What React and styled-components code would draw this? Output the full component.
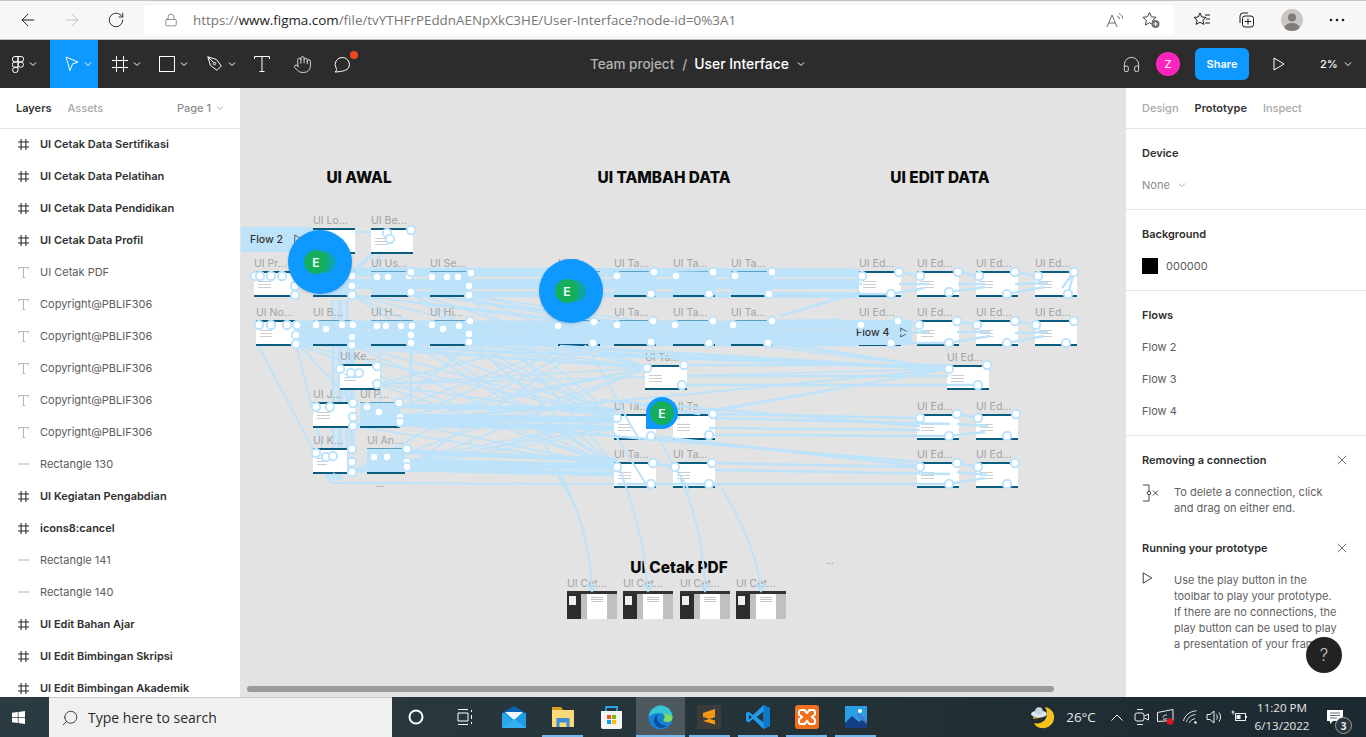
import React from 'react';
import styled, { createGlobalStyle } from 'styled-components';
import { ArrowLeft, ArrowRight, RotateCw, Lock, Headphones, Hand, X, Search } from 'lucide-react';

const BLUE = '#0d99ff';
const LINK = '#bde3fb';
const CX = 240;
const CY = 88;

const GlobalStyle = createGlobalStyle`
  html, body { margin: 0; padding: 0; height: 100%; overflow: hidden; }
  body { font-family: Inter, "Liberation Sans", sans-serif; background: #fff; }
  * { box-sizing: border-box; }
`;

const Page = styled.div`
  width: 1366px;
  height: 737px;
  display: flex;
  flex-direction: column;
  overflow: hidden;
`;

/* browser chrome */
const BrowserBar = styled.div`
  height: 40px;
  flex: none;
  display: flex;
  align-items: center;
  background: #f7f7f7;
  border-top: 1px solid #c4c4c4;
  border-bottom: 1px solid #bdbdbd;
  padding-left: 6px;
  color: #1c1c1c;
`;
const NavButton = styled.div`
  width: 44px;
  display: flex;
  justify-content: center;
  color: ${p => (p.$off ? '#c4c4c4' : '#1c1c1c')};
`;
const UrlBox = styled.div`
  width: 1030px;
  height: 30px;
  margin-left: 6px;
  background: #fff;
  border-radius: 4px;
  display: flex;
  align-items: center;
  padding: 0 14px 0 20px;
  color: #555;
`;
const UrlText = styled.div`
  margin-left: 15px;
  flex: 1;
  font: 13.4px "Open Sans", sans-serif;
  color: #767676;
  white-space: nowrap;
  b { font-weight: 400; color: #222; }
`;
const UrlIcons = styled.div`
  display: flex;
  gap: 18px;
  align-items: center;
`;
const BrowserTools = styled.div`
  display: flex;
  align-items: center;
  margin-left: 19px;
  gap: 26px;
  color: #1c1c1c;
`;
const Profile = styled.div`
  width: 22px;
  height: 22px;
  border-radius: 50%;
  background: #c9c6c3;
  overflow: hidden;
  svg { display: block; }
`;

/* figma toolbar */
const Toolbar = styled.div`
  height: 48px;
  flex: none;
  display: flex;
  align-items: stretch;
  background: #2c2c2c;
  color: #fff;
`;
const Tool = styled.div`
  width: ${p => p.$w}px;
  display: flex;
  align-items: center;
  justify-content: ${p => (p.$pad ? 'flex-start' : 'center')};
  padding-left: ${p => p.$pad || 0}px;
  gap: 5px;
  position: relative;
  background: ${p => (p.$active ? BLUE : 'transparent')};
`;
const RedDot = styled.span`
  position: absolute;
  top: 11px;
  right: 4px;
  width: 8px;
  height: 8px;
  border-radius: 50%;
  background: #f24822;
`;
const DocTitle = styled.div`
  margin-left: 228px;
  display: flex;
  align-items: center;
  font-size: 13.5px;
  font-weight: 500;
  white-space: nowrap;
  color: #b3b3b3;
  span { margin: 0 7px 0 8px; }
  strong { font-size: 13.9px; font-weight: 500; color: #fff; margin-right: 8px; }
`;
const ToolbarRight = styled.div`
  margin-left: auto;
  display: flex;
  align-items: center;
`;
const Avatar = styled.div`
  width: 24px;
  height: 24px;
  margin-left: 15px;
  border-radius: 50%;
  background: #ff24bd;
  font-size: 11px;
  font-weight: 500;
  display: flex;
  align-items: center;
  justify-content: center;
`;
const ShareButton = styled.div`
  width: 54px;
  height: 32px;
  margin-left: 15px;
  background: ${BLUE};
  border-radius: 6px;
  font-size: 11px;
  font-weight: 600;
  display: flex;
  align-items: center;
  justify-content: center;
`;
const PlayWrap = styled.div`
  margin-left: 24px;
  display: flex;
`;
const Zoom = styled.div`
  margin-left: 35px;
  margin-right: 9px;
  width: 37px;
  font-size: 11px;
  font-weight: 500;
  display: flex;
  align-items: center;
  gap: 6px;
`;

/* main area */
const Main = styled.div`
  flex: 1;
  min-height: 0;
  display: flex;
`;
const LeftPanel = styled.div`
  width: 240px;
  flex: none;
  background: #fff;
  overflow: hidden;
`;
const PanelHead = styled.div`
  height: 41px;
  display: flex;
  align-items: center;
  padding-left: 16px;
  gap: 16px;
  font-size: 11px;
  font-weight: 500;
  color: #a8a8a8;
  border-bottom: 1px solid #e5e5e5;
`;
const HeadTab = styled.span`
  font-weight: ${p => (p.$on ? 600 : 500)};
  color: ${p => (p.$on ? '#333' : '#a8a8a8')};
`;
const PageSwitch = styled.span`
  margin-left: auto;
  margin-right: 16px;
  display: flex;
  align-items: center;
  gap: 5px;
  color: #8a8a8a;
`;
const LayerList = styled.div`
  margin-top: -1px;
`;
const LayerRow = styled.div`
  height: 32px;
  display: flex;
  align-items: center;
  padding-left: 18px;
  gap: 11px;
  font-size: 11px;
  font-weight: ${p => (p.$frame ? 600 : 400)};
  color: ${p => (p.$frame ? '#2f2f2f' : '#5b5b5b')};
  white-space: nowrap;
`;
const Canvas = styled.div`
  flex: 1;
  position: relative;
  background: #e3e3e3;
  overflow: hidden;
`;
const Layer = styled.svg`
  position: absolute;
  left: 0;
  top: 0;
  pointer-events: none;
`;
const SectionTitle = styled.div`
  position: absolute;
  left: ${p => p.$x - CX}px;
  top: ${p => p.$y - CY}px;
  transform: translate(-50%, -50%);
  font-family: Inter, sans-serif;
  font-weight: 800;
  font-size: 15.4px;
  color: #0a0a0a;
  white-space: nowrap;
`;
const Frame = styled.div`
  position: absolute;
  left: ${p => p.$x - CX}px;
  top: ${p => p.$y - CY}px;
  width: ${p => p.$w}px;
  height: ${p => p.$h}px;
`;
const FrameLabel = styled.div`
  position: absolute;
  left: 0;
  top: -14px;
  font-size: 10.5px;
  line-height: 13px;
  color: #a2a2a2;
  white-space: nowrap;
`;
const Thumb = styled.div`
  height: 100%;
  padding-top: 2px;
  background: ${p => (p.$covered ? LINK : '#fff')};
  border-top: ${p => (p.$covered ? 1 : 2)}px solid ${p => (p.$covered ? '#5e9fc0' : '#0b5d80')};
  border-bottom: 2px solid #0b5d80;
`;
const ThumbLines = styled.div`
  margin: 6px 4px 0;
  height: 7px;
  width: 30%;
  background: repeating-linear-gradient(#cdcdcd 0 1px, transparent 1px 3px);
`;
const PrintThumb = styled.div`
  height: 100%;
  display: grid;
  grid-template-columns: 28% 11% 40% 21%;
  grid-template-rows: 3px 1fr;
  background: #c0c0c0;
`;
const PrintTop = styled.div`
  grid-column: 1 / -1;
  background: #333;
`;
const PrintSide = styled.div`
  background: #2c2c2c;
  padding: 2px 5px 0 2px;
  &::before {
    content: '';
    display: block;
    height: 9px;
    background: #eee;
  }
`;
const PrintGap = styled.div`
  background: #c0c0c0;
`;
const PrintSheet = styled.div`
  background: #fff;
  padding: 3px 4px;
  &::before {
    content: '';
    display: block;
    height: 5px;
    background: repeating-linear-gradient(#c4c4c4 0 1px, transparent 1px 2px);
  }
`;
const FlowTag = styled.div`
  position: absolute;
  left: ${p => p.$x - CX}px;
  top: ${p => p.$y - CY}px;
  width: ${p => p.$w}px;
  height: 25px;
  padding-left: 9px;
  gap: 11px;
  display: flex;
  align-items: center;
  background: ${LINK};
  font-size: 10.5px;
  font-weight: 500;
  color: #333;
`;
const Cursor = styled.div`
  position: absolute;
  left: ${p => p.$x - 32 - CX}px;
  top: ${p => p.$y - 32 - CY}px;
  width: 64px;
  height: 64px;
  border-radius: 50%;
  background: ${BLUE};
  box-shadow: 0 1px 3px rgba(0, 0, 0, 0.18);
  display: flex;
  align-items: center;
  justify-content: center;
`;
const PinCursor = styled.div`
  position: absolute;
  left: 406px;
  top: 309px;
  width: 32px;
  height: 32px;
  border-radius: 50% 50% 50% 0;
  background: ${BLUE};
  display: flex;
  align-items: center;
  justify-content: center;
`;
const Face = styled.div`
  width: 24px;
  height: 24px;
  margin-right: ${p => (p.$pin ? 0 : 8)}px;
  border-radius: 50%;
  background: #14ae5c;
  color: #fff;
  font-size: 12px;
  font-weight: 600;
  display: flex;
  align-items: center;
  justify-content: center;
  position: relative;
  ${p => !p.$pin && `box-shadow: 8px 0 0 -1px #10a5a0;`}
`;
const Dots = styled.div`
  position: absolute;
  left: ${p => p.$x - CX}px;
  top: ${p => p.$y - CY}px;
  font-size: 9px;
  color: #999;
`;
const ScrollBar = styled.div`
  position: absolute;
  left: 7px;
  bottom: 5px;
  width: 807px;
  height: 6px;
  border-radius: 3px;
  background: #9b9b9b;
`;
const RightPanel = styled.div`
  width: 240px;
  flex: none;
  background: #fff;
  position: relative;
  overflow: hidden;
`;
const Section = styled.div`
  height: ${p => p.$h}px;
  padding: 0 16px;
  border-bottom: ${p => (p.$open ? 'none' : '1px solid #e5e5e5')};
`;
const SectionHead = styled.div`
  height: 48px;
  display: flex;
  align-items: center;
  justify-content: space-between;
  font-size: 11px;
  font-weight: 600;
  color: #2f2f2f;
`;
const FieldList = styled.div`
  margin-top: -8px;
`;
const Field = styled.div`
  height: 32px;
  display: flex;
  align-items: center;
  gap: 8px;
  font-size: 11px;
  color: ${p => p.$color || '#5b5b5b'};
`;
const Swatch = styled.span`
  width: 16px;
  height: 16px;
  background: #000;
`;
const Tip = styled.div`
  display: flex;
  gap: 10px;
  font-size: 11px;
  line-height: 16px;
  color: #5f5f5f;
  white-space: nowrap;
`;
const TipIcon = styled.div`
  width: 22px;
  flex: none;
  display: flex;
`;
const HelpButton = styled.div`
  position: absolute;
  right: 24px;
  bottom: 24px;
  width: 36px;
  height: 36px;
  border-radius: 50%;
  background: #222;
  color: #c8c8c8;
  font-size: 17px;
  font-weight: 300;
  display: flex;
  align-items: center;
  justify-content: center;
`;

/* windows taskbar */
const Taskbar = styled.div`
  height: 40px;
  flex: none;
  display: flex;
  align-items: center;
  background: linear-gradient(90deg, #2b3b42, #263539 45%, #1c2931);
  color: #fff;
`;
const StartButton = styled.div`
  width: 49px;
  padding-left: 12px;
  display: flex;
`;
const SearchBox = styled.div`
  width: 343px;
  height: 40px;
  background: #f0f0f0;
  border-top: 1px solid #c9c9c9;
  display: flex;
  align-items: center;
  padding-left: 12px;
  gap: 9px;
  font: 14px "Open Sans", sans-serif;
  color: #2b2b2b;
  svg { color: #222; transform: scaleX(-1); }
`;
const TaskItem = styled.div`
  width: 48.8px;
  height: 40px;
  flex: none;
  position: relative;
  display: flex;
  align-items: center;
  justify-content: center;
  background: ${p => (p.$active ? '#4d585e' : 'transparent')};
  &::after {
    content: ${p => (p.$open ? "''" : 'none')};
    position: absolute;
    left: ${p => (p.$active ? 0 : 4)}px;
    right: ${p => (p.$active ? 0 : 4)}px;
    bottom: 0;
    height: 2px;
    background: #76b9ed;
  }
`;
const Tray = styled.div`
  margin-left: auto;
  display: flex;
  align-items: center;
  height: 40px;
  font: 13.4px "Open Sans", sans-serif;
  color: #e8e8e8;
`;
const TraySlot = styled.div`
  width: ${p => p.$w}px;
  display: flex;
  justify-content: center;
  align-items: center;
  position: relative;
`;
const Clock = styled.div`
  width: 60px;
  text-align: center;
  font-size: 11.6px;
  line-height: 18px;
  white-space: nowrap;
`;
const Badge = styled.span`
  position: absolute;
  left: 23px;
  top: 7px;
  width: 17px;
  height: 17px;
  border-radius: 50%;
  background: #2a363c;
  border: 1px solid #9aa0a3;
  font-size: 10px;
  font-weight: 700;
  display: flex;
  align-items: center;
  justify-content: center;
`;

const Chevron = ({ color = '#fff', size = 8 }) => (
  <svg width={size} height={size} viewBox="0 0 8 8" fill="none">
    <path d="M1 2.500l3 3 3-3" stroke={color} strokeWidth="1" />
  </svg>
);
const HashIcon = ({ size = 16, color = '#fff', stroke = 1 }) => (
  <svg width={size} height={size} viewBox="0 0 16 16" fill="none" stroke={color} strokeWidth={stroke}>
    <path d="M4.500 0v16M11.500 0v16M0 4.500h16M0 11.500h16" />
  </svg>
);
const TIcon = ({ size = 11, color = '#b3b3b3' }) => (
  <svg width={size} height={size} viewBox="0 0 10 10" fill="none" stroke={color} strokeWidth="0.9">
    <path d="M.5 2V.5h9V2M5 .5v9M3.500 9.500h3" />
  </svg>
);
const LineIcon = () => (
  <svg width="11" height="10" viewBox="0 0 11 10">
    <path d="M0 5h11" stroke="#b3b3b3" />
  </svg>
);
const PlayIcon = ({ color = '#fff', w = 12, h = 14 }) => (
  <svg width={w} height={h} viewBox="0 0 12 14" fill="none">
    <path d="M1 1l10 6-10 6z" stroke={color} />
  </svg>
);
const FigmaMark = () => (
  <svg width="12" height="17" viewBox="0 0 12 17" fill="none" stroke="#fff" strokeWidth="1">
    <path d="M6 .5H3a2.700 2.700 0 000 5.400h3zM6 .5h3a2.700 2.700 0 010 5.400H6zM6 5.900H3a2.700 2.700 0 000 5.400h3z" />
    <circle cx="8.800" cy="8.600" r="2.700" />
    <path d="M6 11.300H3A2.700 2.700 0 106 14z" />
  </svg>
);
const MoveIcon = () => (
  <svg width="14" height="16" viewBox="0 0 14 16" fill="none" stroke="#fff" strokeWidth="1">
    <path d="M1 1l12 5.200-5.400 1.600L5 14.600z" />
  </svg>
);
const PenIcon = () => (
  <svg width="16" height="16" viewBox="0 0 16 16" fill="none" stroke="#fff" strokeWidth="1">
    <path d="M.8.8l8.500 2.600 5 6.600-4.300 4.300-6.600-5zM.8.8l5.800 5.800" />
    <circle cx="7.500" cy="7.500" r="1.200" />
  </svg>
);
const TextTool = () => (
  <svg width="16" height="16" viewBox="0 0 16 16" fill="none" stroke="#fff" strokeWidth="1">
    <path d="M.5 3V.5h15V3M8 .5v15M5.500 15.500h5" />
  </svg>
);
const CommentIcon = () => (
  <svg width="19" height="19" viewBox="0 0 19 19" fill="none" stroke="#fff" strokeWidth="1">
    <path d="M9.500 2.500a7 7 0 016 10.400c-1.500 2.200-4.800 3.600-13.500 4.100 1.500-1 2-2.300 1.200-3.800A7 7 0 019.500 2.500z" />
  </svg>
);

const Reader = () => (
  <svg width="18" height="16" viewBox="0 0 18 16" fill="none" stroke="#6d6d6d" strokeWidth="1">
    <path d="M1 15L6 3l5 12M3 11h6M11 4c1.600.5 2.400 1.600 2.400 3M13 1.500c2.200.8 3.500 2.500 3.500 5" />
  </svg>
);
const FavAdd = () => (
  <svg width="18" height="18" viewBox="0 0 18 18" fill="none">
    <path d="M7.500 1.500l2 4.300 4.600.5-3.400 3.100.9 4.600-4.100-2.300-4.100 2.300.9-4.600L.9 6.300l4.600-.5z" stroke="#444" />
    <circle cx="13.500" cy="13" r="4" fill="#707070" />
    <path d="M13.500 11v4M11.500 13h4" stroke="#fff" />
  </svg>
);
const FavList = () => (
  <svg width="18" height="18" viewBox="0 0 18 18" fill="none" stroke="#1c1c1c">
    <path d="M7 2l1.800 4 4.200.4-3.100 2.800.9 4.200L7 11.300l-3.800 2.100.9-4.200L1 6.400l4.200-.4zM12 4h5M13 8h4M12 12h5" />
  </svg>
);
const Collections = () => (
  <svg width="18" height="18" viewBox="0 0 18 18" fill="none" stroke="#1c1c1c">
    <path d="M3 12V5a3 3 0 013-3h5" />
    <rect x="5.500" y="5" width="11" height="11" rx="2.500" />
    <path d="M11 7.500v6M8 10.500h6" />
  </svg>
);
const ProfileGlyph = () => (
  <svg width="22" height="22" viewBox="0 0 22 22">
    <circle cx="11" cy="8.500" r="4" fill="#7f7c78" />
    <ellipse cx="11" cy="19" rx="7.500" ry="5" fill="#7f7c78" />
  </svg>
);
const MoreDots = () => (
  <svg width="16" height="4" viewBox="0 0 16 4" fill="#1c1c1c">
    <circle cx="2" cy="2" r="1.300" /><circle cx="8" cy="2" r="1.300" /><circle cx="14" cy="2" r="1.300" />
  </svg>
);

const RemoveIcon = () => (
  <svg width="20" height="18" viewBox="0 0 20 18" fill="none" stroke="#333" strokeWidth="0.9">
    <path d="M1 1h6v16H1" />
    <circle cx="7" cy="9" r="1.700" fill="#fff" />
    <path d="M11 6.500l5 5M16 6.500l-5 5" />
  </svg>
);

/* taskbar icons */
const WinLogo = () => (
  <svg width="13" height="13" viewBox="0 0 13 13" fill="#fff">
    <path d="M0 1.800l5.800-.8v5.200H0zM6.500.9L13 0v6.200H6.500zM0 6.900h5.800V12L0 11.200zM6.500 6.900H13V13l-6.500-.9z" />
  </svg>
);
const TaskCircle = () => (
  <svg width="16" height="16" viewBox="0 0 16 16" fill="none" stroke="#fff" strokeWidth="2">
    <circle cx="8" cy="8" r="6.500" />
  </svg>
);
const TaskView = () => (
  <svg width="16" height="20" viewBox="0 0 16 20" fill="none" stroke="#fff">
    <path d="M1 2.500h10M1 17.500h10M1 6h10v8H1zM14.500 3v2M14.500 8v4M14.500 15v2" />
  </svg>
);
const MailIcon = () => (
  <svg width="24" height="22" viewBox="0 0 24 22">
    <path d="M0 7L12 0l12 7v1H0z" fill="#0a63b5" />
    <path d="M0 7h24v15H0z" fill="#1f9be6" />
    <path d="M3 6h18l-9 8z" fill="#f2f7fb" />
    <path d="M0 22l12-9 12 9z" fill="#39aef0" />
    <path d="M0 7l10 7-10 8z" fill="#2aa6ec" />
  </svg>
);
const FolderIcon = () => (
  <svg width="22" height="20" viewBox="0 0 22 20">
    <path d="M0 0h9l2 3H0z" fill="#d99f1f" />
    <path d="M0 3h22v17H0z" fill="#f9d978" />
    <path d="M4.500 11h13v9h-3v-4.500h-7V20h-3z" fill="#3b8edb" />
  </svg>
);
const StoreIcon = () => (
  <svg width="23" height="24" viewBox="0 0 23 24">
    <path d="M6 7V2h11v5" fill="none" stroke="#2aa3ea" strokeWidth="1.800" />
    <path d="M1 6h21v16a2 2 0 01-2 2H3a2 2 0 01-2-2z" fill="#f5f5f5" />
    <path d="M7 10h4v4H7z" fill="#f25022" />
    <path d="M12 10h4v4h-4z" fill="#7fba00" />
    <path d="M7 15h4v4H7z" fill="#00a4ef" />
    <path d="M12 15h4v4h-4z" fill="#ffb900" />
  </svg>
);
const EdgeIcon = () => (
  <svg width="25" height="25" viewBox="0 0 25 25">
    <circle cx="12.500" cy="12.500" r="12" fill="#1582d8" />
    <path d="M1 10C3 3 9 .5 12.500.5 19 .5 24.500 5.500 24.500 12c0 3-2 5-5 5-2.500 0-4-1-4-2 3-2 1-7-4-7C7 8 3 9 1 12z" fill="#37c6d0" />
    <path d="M24.500 12c0 3-2 5-5 5-2.500 0-4-1-4-2 2-2 1.500-5-.5-6.500 4 0 7 1 9.500 3.500z" fill="#7fdc5a" />
    <path d="M7 19c-2-3-1-8 2.500-9.500C7.500 15 12 21 19 20.500 16 24 9 24 7 19z" fill="#0c4f9c" />
  </svg>
);
const SublimeIcon = () => (
  <svg width="24" height="24" viewBox="0 0 24 24">
    <rect width="24" height="24" rx="2" fill="#3c3c3c" />
    <path d="M6 8l12-4v4L6 12zM6 12l12 3.500v4L6 16zM6 16l12-4v-4L6 12z" fill="#f89a12" />
    <path d="M6 12l12-3.800V8.800L6 12.600z" fill="#d97e08" />
  </svg>
);
const VsCodeIcon = () => (
  <svg width="24" height="24" viewBox="0 0 24 24">
    <path d="M17.500 0L24 3v18l-6.500 3L7 14l-4.500 3.500L0 16v-8l2.500-1.500L7 10z" fill="#1f9cf0" />
    <path d="M17.500 6.500L10.500 12l7 5.500z" fill="#273639" />
    <path d="M2.800 9.500L6 12l-3.200 2.500z" fill="#273639" />
    <path d="M17.500 0L24 3v18l-6.500 3z" fill="#0a7acb" />
  </svg>
);
const XamppIcon = () => (
  <svg width="24" height="24" viewBox="0 0 24 24">
    <rect width="24" height="24" rx="3" fill="#f0701f" />
    <path d="M6 5h3.500L12 8l2.500-3H18a2 2 0 012 2v2.500L17 12l3 2.500V17a2 2 0 01-2 2h-3.500L12 16l-2.500 3H6a2 2 0 01-2-2v-2.500L7 12 4 9.500V7a2 2 0 012-2z" fill="none" stroke="#fff" strokeWidth="2" />
  </svg>
);
const PhotosIcon = () => (
  <svg width="22" height="22" viewBox="0 0 22 22">
    <path d="M0 0h22v22H0z" fill="#2a9fe6" />
    <path d="M0 17l7-7 7 6 4-3 4 3v6H0z" fill="#123f85" />
    <path d="M9 8l5 4 8 6v-3l-7-7-4 1z" fill="#4a78d0" />
    <circle cx="15" cy="5" r="2" fill="#fff" />
  </svg>
);
const WeatherIcon = () => (
  <svg width="24" height="26" viewBox="0 0 24 26">
    <path d="M14 3c6 1 10 6 9 12-1 6-7 10-13 9-3-.5-6-2-7-5 7 2 13-3 13-9 0-3-1-5-2-7z" fill="#f8c21c" />
    <path d="M2 14c3 0 6 0 9-2" fill="none" stroke="#f8c21c" strokeWidth="1.500" />
    <ellipse cx="8" cy="10" rx="8" ry="3.500" fill="#dbe8f2" />
    <circle cx="8" cy="7" r="3.800" fill="#c5d7e6" />
  </svg>
);
const TrayCaret = () => (
  <svg width="12" height="7" viewBox="0 0 12 7" fill="none" stroke="#fff">
    <path d="M.5 6.500L6 1l5.500 5.500" />
  </svg>
);
const MeetIcon = () => (
  <svg width="16" height="18" viewBox="0 0 16 18" fill="none" stroke="#eee">
    <path d="M3 1.500h6M3 16.500h6" />
    <rect x="1" y="5" width="9" height="8" rx="2" />
    <path d="M10.500 8l4-2v6l-4-2" />
  </svg>
);
const ScreenIcon = () => (
  <svg width="18" height="16" viewBox="0 0 18 16">
    <path d="M.5 3.500l15.500-3v11l-15.500 1z" fill="none" stroke="#eee" />
    <path d="M6 8.500c0-2 2-2.500 4-2.500M10 9c0 1-2 1.500-4 1" fill="none" stroke="#eee" />
    <circle cx="13" cy="12.500" r="3.200" fill="#e81123" />
  </svg>
);
const WifiIcon = () => (
  <svg width="15" height="14" viewBox="0 0 15 14" fill="none" stroke="#ddd">
    <path d="M.5 11C1.500 5.500 7 1 13.500.8M3.500 12c.6-3.500 4-7 9-7.500M6.500 13c.4-2 2.500-4 5.500-4.300" />
    <circle cx="12.500" cy="12.500" r="1.200" fill="#fff" stroke="none" />
  </svg>
);
const VolumeIcon = () => (
  <svg width="17" height="14" viewBox="0 0 17 14" fill="none" stroke="#eee">
    <path d="M1 4.500h3L8 1v12L4 9.500H1zM10.500 4.500c1 1.500 1 3.500 0 5M13 2.500c2 2.500 2 6.500 0 9" />
  </svg>
);
const BatteryIcon = () => (
  <svg width="16" height="14" viewBox="0 0 16 14" fill="none" stroke="#eee">
    <rect x="4.500" y="3.500" width="10" height="7" />
    <path d="M15.500 6v2" />
    <path d="M5.500 5h4v4h-4z" fill="#eee" stroke="none" />
    <path d="M2 .5v4M.5 2h3" />
  </svg>
);
const NoteIcon = () => (
  <svg width="16" height="14" viewBox="0 0 16 14">
    <path d="M0 0h16v11H6l-3 3v-3H0z" fill="#fff" />
    <path d="M3 3h10M3 5.500h10M3 8h7" stroke="#3a4a52" strokeWidth="0.8" />
  </svg>
);

/* page data */
const LAYERS = [
  ['f', 'UI Cetak Data Sertifikasi'],
  ['f', 'UI Cetak Data Pelatihan'],
  ['f', 'UI Cetak Data Pendidikan'],
  ['f', 'UI Cetak Data Profil'],
  ['t', 'UI Cetak PDF'],
  ['t', 'Copyright@PBLIF306'],
  ['t', 'Copyright@PBLIF306'],
  ['t', 'Copyright@PBLIF306'],
  ['t', 'Copyright@PBLIF306'],
  ['t', 'Copyright@PBLIF306'],
  ['l', 'Rectangle 130'],
  ['f', 'UI Kegiatan Pengabdian'],
  ['f', 'icons8:cancel'],
  ['l', 'Rectangle 141'],
  ['l', 'Rectangle 140'],
  ['f', 'UI Edit Bahan Ajar'],
  ['f', 'UI Edit Bimbingan Skripsi'],
  ['f', 'UI Edit Bimbingan Akademik'],
];

// x, thumb top, width, height, label, covered by links
const FRAMES = [
  [313, 228, 42, 26, 'UI Lo...', false],
  [371, 228, 42, 26, 'UI Be...', false],
  [254, 271, 42, 26, 'UI Pr...', false],
  [313, 271, 42, 26, 'UI D...', true],
  [371, 271, 42, 26, 'UI Us...', true],
  [430, 271, 40, 26, 'UI Se...', true],
  [256, 320, 40, 26, 'UI No...', false],
  [313, 320, 42, 26, 'UI B...', true],
  [371, 320, 42, 26, 'UI H...', true],
  [430, 320, 40, 26, 'UI Hi...', true],
  [340, 364, 40, 26, 'UI Ke...', false],
  [313, 402, 42, 26, 'UI J...', false],
  [360, 402, 40, 26, 'UI P...', true],
  [313, 448, 34, 26, 'UI K...', false],
  [367, 448, 38, 26, 'UI An...', true],
  [558, 271, 42, 26, 'UI Ta...', true],
  [614, 271, 42, 26, 'UI Ta...', true],
  [673, 271, 42, 26, 'UI Ta...', true],
  [731, 271, 42, 26, 'UI Ta...', true],
  [558, 320, 42, 26, 'UI Ta...', true],
  [614, 320, 42, 26, 'UI Ta...', true],
  [673, 320, 42, 26, 'UI Ta...', true],
  [731, 320, 42, 26, 'UI Ta...', true],
  [645, 365, 42, 25, 'UI Ta...', false],
  [614, 414, 42, 26, 'UI Ta...', false],
  [673, 414, 42, 26, 'UI Ta...', false],
  [614, 462, 42, 26, 'UI Ta...', false],
  [673, 462, 42, 26, 'UI Ta...', false],
  [859, 271, 42, 26, 'UI Ed...', false],
  [917, 271, 42, 26, 'UI Ed...', false],
  [976, 271, 42, 26, 'UI Ed...', false],
  [1035, 271, 42, 26, 'UI Ed...', false],
  [859, 320, 42, 26, 'UI Ed...', false],
  [917, 320, 42, 26, 'UI Ed...', false],
  [976, 320, 42, 26, 'UI Ed...', false],
  [1035, 320, 42, 26, 'UI Ed...', false],
  [947, 365, 42, 25, 'UI Ed...', false],
  [917, 414, 42, 26, 'UI Ed...', false],
  [976, 414, 42, 26, 'UI Ed...', false],
  [917, 462, 42, 26, 'UI Ed...', false],
  [976, 462, 42, 26, 'UI Ed...', false],
];
const PRINT_FRAMES = [567, 623, 680, 736];

const PORTS = [
  [411,230],[387,233],[390,239],[255,276],[260,276],[271,276],[282,276],[295,286],[295,295],
  [352,276],[352,286],[352,295],[377,277],[388,277],[409,276],[411,272],[411,292],
  [432,277],[447,277],[458,277],[471,273],[469,286],[469,295],
  [259,325],[271,325],[287,325],[297,325],[296,335],[296,344],
  [316,325],[326,329],[342,325],[353,325],[352,337],[352,345],
  [377,326],[386,326],[401,326],[412,326],[411,335],[411,343],
  [432,325],[443,329],[459,326],[470,321],[469,334],[469,342],
  [377,366],[340,369],[351,373],[359,373],[377,384],
  [316,407],[330,407],[353,403],[353,417],[353,426],[367,407],[379,412],[399,403],[400,417],[400,422],
  [316,453],[326,457],[333,456],[352,449],[352,462],[352,472],[374,457],[387,457],[407,449],[407,462],[407,467],
  [558,326],[594,322],[593,343],
  [617,276],[654,272],[651,294],[676,276],[713,272],[709,294],[735,276],[772,272],[769,294],
  [617,325],[653,321],[651,342],[675,325],[713,321],[709,343],[733,325],[772,321],[768,343],
  [647,368],[684,365],[682,385],
  [617,418],[651,436],[713,414],[709,435],
  [617,467],[653,463],[651,484],[675,467],[712,463],[709,484],
  [862,276],[899,272],[891,294],[920,276],[958,272],[949,292],[979,276],[1015,272],[1007,294],[1038,276],[1074,272],[1068,294],
  [861,325],[898,321],[891,343],[919,325],[957,321],[949,343],[977,325],[1015,321],[1007,343],[1036,325],[1074,321],[1066,343],
  [949,369],[987,365],[978,385],
  [920,418],[957,414],[949,436],[978,418],[1016,414],[1007,436],
  [920,467],[957,463],[949,484],[978,467],[1015,463],[1007,484],
];

// solid runs of overlapping connectors: x1, y1, x2, y2, width
const BANDS = [
  [352,272,860,273,9],[352,284,870,284,10],[411,294,890,295,6],
  [296,325,860,325,9],[296,336,860,336,12],[296,343,900,344,5],
  [352,232,411,232,2],[390,239,352,272,3],[390,239,370,272,2],
  [400,406,618,410,5],[400,417,617,420,7],[400,424,617,428,6],
  [407,452,617,460,5],[407,462,617,467,7],[407,469,617,474,5],
  [340,300,340,480,5],[347,300,347,470,3],[333,300,333,480,3],[352,345,352,450,5],
  [296,344,330,480,2],[258,345,330,482,2],
  [299,345,352,402,2],
  [411,345,411,402,3],[380,346,380,402,2],[470,345,400,402,2],
  [330,483,617,484,2],[553,467,575,505,2],
];

// thin connectors that fan out across the lower canvas
const FAN_FROM = [[352,295],[411,292],[469,295],[296,344],[352,345],[411,343],[469,342],[377,384],[353,426],[400,422],[352,472],[407,467]];
const FAN_TO = [[617,418],[617,467],[647,368],[949,369],[617,325]];

const FRONT = [
  [654,272,860,276],[713,280,862,284],[772,272,862,276],[769,294,891,294],
  [899,272,920,276],[899,284,930,284],[891,294,925,288],[958,272,979,276],[958,284,985,284],[949,292,985,287],
  [1015,272,1038,276],[1015,284,1048,283],[1007,294,1045,287],[1074,272,1062,288],[1068,294,1074,272],
  [772,321,840,320],[780,316,860,292],[772,321,861,325],[768,343,891,343],
  [898,321,919,325],[898,333,930,332],[891,343,949,343],[957,321,977,325],[957,332,990,332],[949,343,990,336],
  [1015,321,1036,325],[1015,333,1048,332],[1007,343,1044,336],
  [560,346,949,369],[684,365,949,365],[687,376,949,376],[682,385,978,385],[600,354,948,369],
  [713,414,920,418],[713,418,950,424],[709,435,949,436],[709,428,920,430],[600,400,920,426],
  [957,414,978,418],[957,424,988,426],[949,436,985,432],
  [712,463,920,467],[715,470,950,474],[709,484,949,484],[651,436,920,466],[651,484,716,484],
  [957,463,978,467],[957,472,988,475],[949,484,985,478],[617,484,651,484],[540,430,920,462],
  [653,463,675,467],[654,414,680,418],[640,405,700,414],
];

const CURVES = [
  'M545 445C570 490 590 530 592 590',
  'M620 470C635 510 646 550 647 590',
  'M680 478C695 510 704 550 705 590',
  'M722 488C740 520 758 555 761 590',
  'M585 345C610 380 625 420 640 440',
  'M612 430C625 450 640 475 650 490',
  'M660 440C670 460 680 475 690 492',
];

const sh = ([x1, y1, x2, y2]) => [x1 - CX, y1 - CY, x2 - CX, y2 - CY];
const toLine = (d, key, w) => {
  const [x1, y1, x2, y2] = sh(d);
  return <line key={key} x1={x1} y1={y1} x2={x2} y2={y2} strokeWidth={w} />;
};

const Links = () => (
  <Layer width="886" height="609" stroke={LINK} fill="none">
    {BANDS.map((b, i) => toLine(b, 'b' + i, b[4]))}
    {FAN_FROM.flatMap((f, i) =>
      FAN_TO.map((t, j) => toLine([...f, ...t], `f${i}-${j}`, 1.600))
    )}
  </Layer>
);

const FrontLinks = () => (
  <Layer width="886" height="609" stroke={LINK} fill="none">
    {FRONT.map((l, i) => toLine(l, 'l' + i, 2.500))}
    {CURVES.map((d, i) => (
      <path key={i} d={d} strokeWidth="2" transform={`translate(${-CX} ${-CY})`} />
    ))}
    {PRINT_FRAMES.map(x => (
      <path key={x} d={`M${x + 20 - CX} ${584 - CY}L${x + 25 - CX} ${591 - CY}L${x + 30 - CX} ${584 - CY}`} strokeWidth="2" />
    ))}
    <path d={`M${330 - CX} ${482 - CY}L${334 - CX} ${474 - CY}L${340 - CX} ${481 - CY}`} strokeWidth="2" />
    {PORTS.map(([x, y], i) => (
      <circle key={i} cx={x - CX} cy={y - CY} r="4.200" fill="#fff" strokeWidth="2" />
    ))}
  </Layer>
);

const Browser = () => (
  <BrowserBar>
    <NavButton><ArrowLeft size={20} strokeWidth={1.2} /></NavButton>
    <NavButton $off><ArrowRight size={20} strokeWidth={1.2} /></NavButton>
    <NavButton><RotateCw size={18} strokeWidth={1.2} /></NavButton>
    <UrlBox>
      <Lock size={14} strokeWidth={1.1} />
      <UrlText>https://<b>www.figma.com</b>/file/tvYTHFrPEddnAENpXkC3HE/User-Interface?node-id=0%3A1</UrlText>
      <UrlIcons><Reader /><FavAdd /></UrlIcons>
    </UrlBox>
    <BrowserTools>
      <FavList />
      <Collections />
      <Profile><ProfileGlyph /></Profile>
      <MoreDots />
    </BrowserTools>
  </BrowserBar>
);

const FigmaTools = () => (
  <Toolbar>
    <Tool $w={50} $pad={12}><FigmaMark /><Chevron /></Tool>
    <Tool $w={48} $pad={15} $active><MoveIcon /><Chevron /></Tool>
    <Tool $w={48} $pad={14}><HashIcon /><Chevron /></Tool>
    <Tool $w={48} $pad={13}><svg width="16" height="16" fill="none" stroke="#fff"><rect x=".5" y=".5" width="15" height="15" /></svg><Chevron /></Tool>
    <Tool $w={48} $pad={13}><PenIcon /><Chevron /></Tool>
    <Tool $w={40}><TextTool /></Tool>
    <Tool $w={40}><Hand size={19} strokeWidth={1} /></Tool>
    <Tool $w={40}><CommentIcon /><RedDot /></Tool>
    <DocTitle>Team project<span>/</span><strong>User Interface</strong><Chevron /></DocTitle>
    <ToolbarRight>
      <Headphones size={19} strokeWidth={1} />
      <Avatar>Z</Avatar>
      <ShareButton>Share</ShareButton>
      <PlayWrap><PlayIcon /></PlayWrap>
      <Zoom>2%<Chevron /></Zoom>
    </ToolbarRight>
  </Toolbar>
);

const LeftSide = () => (
  <LeftPanel>
    <PanelHead>
      <HeadTab $on>Layers</HeadTab>
      <HeadTab>Assets</HeadTab>
      <PageSwitch>Page 1 <Chevron color="#aaa" /></PageSwitch>
    </PanelHead>
    <LayerList>
      {LAYERS.map(([kind, name], i) => (
        <LayerRow key={i} $frame={kind === 'f'}>
          {kind === 'f' && <HashIcon size={11} color="#222" stroke={1.500} />}
          {kind === 't' && <TIcon />}
          {kind === 'l' && <LineIcon />}
          {name}
        </LayerRow>
      ))}
    </LayerList>
  </LeftPanel>
);

const CanvasArea = () => (
  <Canvas>
    <SectionTitle $x={359} $y={177}>UI AWAL</SectionTitle>
    <SectionTitle $x={664} $y={177}>UI TAMBAH DATA</SectionTitle>
    <SectionTitle $x={940} $y={177}>UI EDIT DATA</SectionTitle>
    <SectionTitle $x={679} $y={567}>UI Cetak PDF</SectionTitle>
    <Links />
    {FRAMES.map(([x, y, w, h, label, covered], i) => (
      <Frame key={i} $x={x} $y={y} $w={w} $h={h}>
        <FrameLabel>{label}</FrameLabel>
        <Thumb $covered={covered}>{!covered && <ThumbLines />}</Thumb>
      </Frame>
    ))}
    {PRINT_FRAMES.map(x => (
      <Frame key={x} $x={x} $y={591} $w={50} $h={28}>
        <FrameLabel>UI Cet...</FrameLabel>
        <PrintThumb>
          <PrintTop />
          <PrintSide />
          <PrintGap />
          <PrintSheet />
          <PrintGap />
        </PrintThumb>
      </Frame>
    ))}
    <FlowTag $x={241} $y={227} $w={72}>Flow 2 <PlayIcon color="#333" w={9} h={11} /></FlowTag>
    <FlowTag $x={847} $y={320} $w={65}>Flow 4 <PlayIcon color="#333" w={9} h={11} /></FlowTag>
    <FrontLinks />
    <Dots $x={376} $y={478}>...</Dots>
    <Dots $x={826} $y={555}>...</Dots>
    <Cursor $x={320} $y={262}><Face>E</Face></Cursor>
    <Cursor $x={571} $y={291}><Face>E</Face></Cursor>
    <PinCursor><Face $pin>E</Face></PinCursor>
    <ScrollBar />
  </Canvas>
);

const RightSide = () => (
  <RightPanel>
    <PanelHead>
      <HeadTab>Design</HeadTab>
      <HeadTab $on>Prototype</HeadTab>
      <HeadTab>Inspect</HeadTab>
    </PanelHead>
    <Section $h={81}>
      <SectionHead>Device</SectionHead>
      <FieldList><Field $color="#8a8a8a">None <Chevron color="#aaa" /></Field></FieldList>
    </Section>
    <Section $h={81}>
      <SectionHead>Background</SectionHead>
      <FieldList><Field><Swatch />000000</Field></FieldList>
    </Section>
    <Section $h={145}>
      <SectionHead>Flows</SectionHead>
      <FieldList>
        <Field>Flow 2</Field>
        <Field>Flow 3</Field>
        <Field>Flow 4</Field>
      </FieldList>
    </Section>
    <Section $h={88} $open>
      <SectionHead>Removing a connection<X size={16} strokeWidth={1} /></SectionHead>
      <Tip>
        <TipIcon><RemoveIcon /></TipIcon>
        <div>To delete a connection, click<br />and drag on either end.</div>
      </Tip>
    </Section>
    <Section $h={130} $open>
      <SectionHead>Running your prototype<X size={16} strokeWidth={1} /></SectionHead>
      <Tip>
        <TipIcon><PlayIcon color="#222" w={11} h={12} /></TipIcon>
        <div>
          Use the play button in the<br />toolbar to play your prototype.<br />If there are no connections, the<br />
          play button can be used to play<br />a presentation of your frames.
        </div>
      </Tip>
    </Section>
    <HelpButton>?</HelpButton>
  </RightPanel>
);

const WinTaskbar = () => (
  <Taskbar>
    <StartButton><WinLogo /></StartButton>
    <SearchBox><Search size={18} strokeWidth={1.1} />Type here to search</SearchBox>
    <TaskItem><TaskCircle /></TaskItem>
    <TaskItem><TaskView /></TaskItem>
    <TaskItem><MailIcon /></TaskItem>
    <TaskItem $open><FolderIcon /></TaskItem>
    <TaskItem><StoreIcon /></TaskItem>
    <TaskItem $active $open><EdgeIcon /></TaskItem>
    <TaskItem $open><SublimeIcon /></TaskItem>
    <TaskItem $open><VsCodeIcon /></TaskItem>
    <TaskItem $open><XamppIcon /></TaskItem>
    <TaskItem $open><PhotosIcon /></TaskItem>
    <Tray>
      <TraySlot $w={30}><WeatherIcon /></TraySlot>
      <TraySlot $w={46}>26°C</TraySlot>
      <TraySlot $w={26}><TrayCaret /></TraySlot>
      <TraySlot $w={24}><MeetIcon /></TraySlot>
      <TraySlot $w={24}><ScreenIcon /></TraySlot>
      <TraySlot $w={24}><WifiIcon /></TraySlot>
      <TraySlot $w={24}><VolumeIcon /></TraySlot>
      <TraySlot $w={26}><BatteryIcon /></TraySlot>
      <Clock>11:20 PM<br />6/13/2022</Clock>
      <TraySlot $w={46}><NoteIcon /><Badge>3</Badge></TraySlot>
      <TraySlot $w={8} />
    </Tray>
  </Taskbar>
);

export default function App() {
  return (
    <Page>
      <GlobalStyle />
      <Browser />
      <FigmaTools />
      <Main>
        <LeftSide />
        <CanvasArea />
        <RightSide />
      </Main>
      <WinTaskbar />
    </Page>
  );
}
